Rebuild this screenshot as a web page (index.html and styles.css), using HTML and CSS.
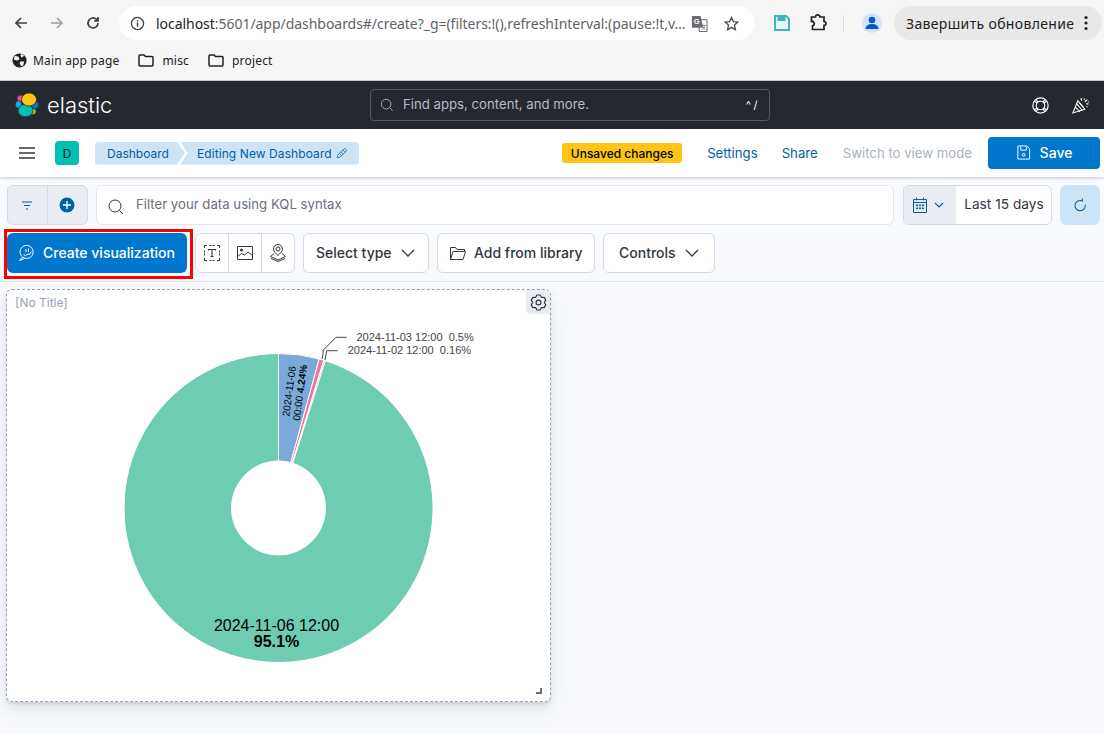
FILE: index.html
```html
<!DOCTYPE html>
<html lang="en">
<head>
<meta charset="utf-8">
<title>Elastic</title>
<link rel="stylesheet" href="styles.css">
</head>
<body>
<div class="browser">
  <div class="tabbar">
    <div class="navs">
      <svg class="nav" viewBox="0 0 16 16"><path d="M14 8H3M8 3L3 8l5 5" fill="none" stroke="#3c4043" stroke-width="1.7"/></svg>
      <svg class="nav" viewBox="0 0 16 16"><path d="M2 8h11M8 3l5 5-5 5" fill="none" stroke="#9aa0a6" stroke-width="1.5"/></svg>
      <svg class="nav" viewBox="0 0 16 16"><path d="M13 8a5 5 0 1 1-1.500-3.600L13 6M13 2v4H9" fill="none" stroke="#3c4043" stroke-width="1.7"/></svg>
    </div>
    <div class="omni">
      <svg class="omni-info" viewBox="0 0 16 16"><circle cx="8" cy="8" r="6.500" fill="none" stroke="#3c4043" stroke-width="1.400"/><path d="M8 7v4.400M8 4.400v1.400" stroke="#3c4043" stroke-width="1.500"/></svg>
      <span class="url"><b class="host">localhost</b>:5601/app/dashboards#/create?_g=(filters:!(),refreshInterval:(pause:!t,v…</span>
      <svg class="omni-tr" viewBox="0 0 18 18"><path d="M7 5h10v12.500H9z" fill="#fff" stroke="#5f6368"/><path d="M1 1h9l3 12.500H1z" fill="#6a6d72"/><text x="3" y="10" class="tr-g">G</text><text x="10.500" y="15" class="tr-a">文</text></svg>
      <svg class="omni-star" viewBox="0 0 16 16"><path d="M8 1.500l2 4.500 4.800.5-3.600 3.200 1 4.800L8 12.100 3.800 14.500l1-4.800L1.200 6.500 6 6z" fill="none" stroke="#4a4d52" stroke-width="1.400"/></svg>
    </div>
    <div class="exts">
      <svg class="ext-save" viewBox="0 0 16 16"><path d="M0 0h12.500L16 3.500V16H0z" fill="#39b8b8"/><path d="M2 2h1.500v4h8V2h.300L14 4.200V14H2z" fill="#e6f6f6"/><path d="M8.500 2H10v2.500H8.500z" fill="#39b8b8"/></svg>
      <svg class="ext-puz" viewBox="0 0 18 18"><path d="M2.500 3h4a2.200 2.200 0 0 1 4.400 0H15v4.500a1.900 1.900 0 0 1 0 3.800V15.500H3.500v-3.700a2.200 2.200 0 0 0-1-4.300z" fill="none" stroke="#202124" stroke-width="1.700"/></svg>
      <i class="sep"></i>
      <span class="avatar"><svg viewBox="0 0 20 20"><circle cx="10" cy="7" r="3.300" fill="#0b57d0"/><path d="M3.500 16c0-3.500 3-5 6.500-5s6.500 1.500 6.500 5z" fill="#0b57d0"/></svg></span>
      <span class="update">Завершить обновление<svg class="dots" viewBox="0 0 4 16"><circle cx="2" cy="2.500" r="1.600"/><circle cx="2" cy="8" r="1.600"/><circle cx="2" cy="13.500" r="1.600"/></svg></span>
    </div>
  </div>
  <div class="bookmarks">
    <span class="bm"><svg class="bm-globe" viewBox="0 0 16 16"><circle cx="8" cy="8" r="7.500" fill="#202124"/><path d="M3 3l4 1 1 3-3 1-3-1zM9 9l4 0-1 4-2 1-2-3zM10 1l3 2-3 2-1-3z" fill="#f5f5f5"/></svg>Main app page</span>
    <span class="bm"><svg class="bm-folder" viewBox="0 0 16 13"><path d="M1 2a1 1 0 0 1 1-1h4l1.500 1.500H14a1 1 0 0 1 1 1V11a1 1 0 0 1-1 1H2a1 1 0 0 1-1-1z" fill="none" stroke="#202124" stroke-width="1.500"/></svg>misc</span>
    <span class="bm"><svg class="bm-folder" viewBox="0 0 16 13"><path d="M1 2a1 1 0 0 1 1-1h4l1.500 1.500H14a1 1 0 0 1 1 1V11a1 1 0 0 1-1 1H2a1 1 0 0 1-1-1z" fill="none" stroke="#202124" stroke-width="1.500"/></svg>project</span>
  </div>
</div>

<header class="kbn-header">
  <div class="brand">
    <svg class="logo" viewBox="0 0 24 24">
      <g stroke="#25282f" stroke-width=".7">
      <ellipse cx="5.500" cy="5.500" rx="3.400" ry="3.400" fill="#f04e98"/>
      <ellipse cx="3.500" cy="11.500" rx="3.200" ry="3.800" fill="#1ba9f5"/>
      <ellipse cx="20" cy="12" rx="3.800" ry="3.800" fill="#0077cc"/>
      <ellipse cx="18" cy="18.500" rx="3.200" ry="3.200" fill="#93c90e"/>
      <ellipse cx="10.500" cy="17.500" rx="7.500" ry="6.300" fill="#00bfb3"/>
      <ellipse cx="14" cy="6.500" rx="7.500" ry="6.500" fill="#fec514"/>
      </g>
    </svg>
    <span class="wordmark">elastic</span>
  </div>
  <div class="global-search">
    <svg class="gs-icon" viewBox="0 0 16 16"><circle cx="7" cy="7" r="5.500" fill="none" stroke="#a4abb8" stroke-width="1.100"/><path d="M11 11l3.500 3.500" stroke="#a4abb8" stroke-width="1.100"/></svg>
    <span class="gs-text">Find apps, content, and more.</span>
    <span class="gs-key">^/</span>
  </div>
  <div class="hdr-icons">
    <svg class="hdr-ic" viewBox="0 0 16 16"><g fill="none" stroke="#fff" stroke-width="1.100"><circle cx="8" cy="8" r="7.200"/><circle cx="8" cy="8" r="4"/><path d="M2.500 4l2.500 1.800M4 2.500l1.800 2.500M13.500 4L11 5.800M12 2.500L10.200 5M2.500 12l2.500-1.800M4 13.500L5.800 11M13.500 12L11 10.200M12 13.500L10.200 11"/></g></svg>
    <svg class="hdr-ic" viewBox="0 0 16 16"><g fill="none" stroke="#fff" stroke-width="1"><path d="M.8 15L5.500 3.500l6.500 8z"/><path d="M3.200 9.500L7.500 14M4.500 6.500L9.800 12.700M7 5.500l4 4.500"/><path d="M8.500 1l.5 2.500M12 4.500l2.500-2M11.500 1.500v1M13.500 6.500h2M13.500 9l1 .5M15 4.500h.8" stroke-width="1.100"/></g></svg>
  </div>
</header>

<nav class="app-bar">
  <svg class="burger" viewBox="0 0 16 12"><path d="M0 1h16M0 6h16M0 11h16" stroke="#343741" stroke-width="1.700"/></svg>
  <span class="space">D</span>
  <div class="crumbs">
    <span class="crumb crumb-first">Dashboard</span>
    <span class="crumb crumb-last">Editing New Dashboard<svg class="pencil" viewBox="0 0 16 16"><path d="M1.500 14.500l1-4 8-8a1.500 1.500 0 0 1 2 0l1 1a1.500 1.500 0 0 1 0 2l-8 8zM4.500 8.500l3 3M6.500 6.500l3 3M9 4l3 3" fill="none" stroke="#0061a6" stroke-width="1"/></svg></span>
  </div>
  <div class="app-actions">
    <span class="unsaved">Unsaved changes</span>
    <a class="link link-settings">Settings</a>
    <a class="link link-share">Share</a>
    <a class="link link-off">Switch to view mode</a>
    <button class="save"><svg class="save-ic" viewBox="0 0 16 16"><path d="M2 1h9.500L14.500 4v11H2zM5 1.500v4h6v-4" fill="none" stroke="#fff" stroke-width="1"/><circle cx="8.200" cy="10.500" r="1.500" fill="none" stroke="#fff"/></svg>Save</button>
  </div>
</nav>

<section class="toolbar">
  <div class="query-row">
    <div class="filter-group">
      <span class="fg-cell"><svg class="fg-filter" viewBox="0 0 12 9"><path d="M1 1h10M3 4.500h6M5 8h2" stroke="#0061a6" stroke-width="1.100"/></svg></span>
      <span class="fg-cell fg-plus"><svg class="fg-add" viewBox="0 0 16 16"><circle cx="8" cy="8" r="7.500" fill="#0061a6"/><path d="M8 4v8M4 8h8" stroke="#fff" stroke-width="1.300"/></svg></span>
    </div>
    <div class="kql">
      <svg class="kql-ic" viewBox="0 0 16 16"><circle cx="7" cy="7" r="6" fill="none" stroke="#343741" stroke-width="1"/><path d="M11.500 11.500l3.500 3.500" stroke="#343741" stroke-width="1"/></svg>
      <span class="kql-text">Filter your data using KQL syntax</span>
    </div>
    <div class="date">
      <span class="date-cal">
        <svg class="cal" viewBox="0 0 14 16"><path d="M.5 2.500h13v13H.5zM.5 5.500h13M3.500 .5v3M10.500 .5v3" fill="none" stroke="#0061a6"/><path d="M3 7.500h2v1.500H3zM6 7.500h2v1.500H6zM9 7.500h2v1.500H9zM3 10.500h2v1.500H3zM6 10.500h2v1.500H6zM9 10.500h2v1.500H9z" fill="#0061a6"/></svg>
        <svg class="chev-s" viewBox="0 0 10 6"><path d="M1 1l4 4 4-4" fill="none" stroke="#0061a6" stroke-width="1.100"/></svg>
      </span>
      <span class="date-text">Last 15 days</span>
    </div>
    <button class="refresh"><svg class="refresh-ic" viewBox="0 0 14 16"><path d="M9.500 3.200A5.500 5.500 0 1 0 12.500 7M9.500 .5v3.500" fill="none" stroke="#0061a6" stroke-width="1.100"/></svg></button>
  </div>
  <div class="action-row">
    <button class="create"><svg class="create-ic" viewBox="0 0 16 16"><g fill="none" stroke="#fff" stroke-width="1"><path d="M3 11.500A6.500 6.500 0 1 1 6 13.200"/><path d="M.5 15.500L3.500 12l2.500 1.300z"/><path d="M4.500 9.500l2 1 2.500-1.500 1.500.5 2-3"/><path d="M7 4v3M9.500 3.500V7"/></g></svg>Create visualization</button>
    <div class="icon-group">
      <span class="ig-cell"><svg class="ig-ic" viewBox="0 0 16 16"><path d="M.5 3V.5H3M5.500 .5h2M8.500 .5h2M13 .5h2.500V3M15.500 5.500v2M15.500 8.500v2M15.500 13v2.500H13M10.500 15.500h-2M7.500 15.500h-2M3 15.500H.5V13M.5 10.500v-2M.5 7.500v-2" fill="none" stroke="#343741"/><path d="M4.500 5.500v-1h7v1M8 4.500v7M6.500 11.500h3" fill="none" stroke="#343741" stroke-width="1.100"/></svg></span>
      <span class="ig-cell"><svg class="ig-ic" viewBox="0 0 16 16"><path d="M.5 1.500h15v13H.5z" fill="none" stroke="#343741"/><circle cx="4.500" cy="5" r="1.500" fill="#343741"/><path d="M.5 11.500l4-3 3 1.500L11 7l4.500 3.500" fill="none" stroke="#343741"/></svg></span>
      <span class="ig-cell"><svg class="ig-ic ig-map" viewBox="0 0 16 18"><g fill="none" stroke="#343741"><path d="M8 11.500C6 9.500 3.500 7.500 3.500 5a4.500 4.500 0 0 1 9 0c0 2.500-2.500 4.500-4.500 6.500z"/><circle cx="8" cy="5" r="2"/><path d="M4 9.500L.5 12.500 8 16l7.500-3.500L12 9.500"/><path d="M1 14.500L8 17.500l7-3"/></g></svg></span>
    </div>
    <button class="tb-btn tb-select">Select type<svg class="chev" viewBox="0 0 14 8"><path d="M1 1l6 6 6-6" fill="none" stroke="#343741" stroke-width="1.300"/></svg></button>
    <button class="tb-btn tb-lib"><svg class="lib-ic" viewBox="0 0 16 13"><path d="M.5 12.500V.5h5l1.500 2h7.500v2M.5 12.500h12.500l2.500-8H3z" fill="none" stroke="#343741"/></svg>Add from library</button>
    <button class="tb-btn tb-controls">Controls<svg class="chev" viewBox="0 0 14 8"><path d="M1 1l6 6 6-6" fill="none" stroke="#343741" stroke-width="1.300"/></svg></button>
    <div class="marker"></div>
  </div>
</section>

<main class="canvas">
  <article class="panel">
    <span class="panel-title">[No Title]</span>
    <span class="panel-gear"><svg class="gear" viewBox="0 0 16 16"><path d="M6.500 .96H9.500L10.700 3.320 13.350 3.180 14.850 5.780 13.400 8 14.850 10.220 13.350 12.820 10.700 12.680 9.500 15.040H6.500L5.300 12.680 2.650 12.820 1.150 10.220 2.600 8 1.150 5.780 2.650 3.180 5.300 3.320z" fill="none" stroke="#343741" stroke-width="1.100" stroke-linejoin="round"/><circle cx="8" cy="8" r="2.300" fill="none" stroke="#343741" stroke-width="1.100"/></svg></span>
    <svg class="pie" width="543" height="410" viewBox="0 0 543 410">
      <path class="slice" d="M271.500 62.500A154.500 154.500 0 0 1 312.160 67.950L283.870 171.660A47 47 0 0 0 271.500 170z" fill="#79aad9"/>
      <path class="slice" d="M312.160 67.950A154.500 154.500 0 0 1 316.830 69.300L285.290 172.070A47 47 0 0 0 283.870 171.660z" fill="#ee789d"/>
      <path class="slice" d="M316.830 69.300A154.500 154.500 0 0 1 318.320 69.760L285.740 172.210A47 47 0 0 0 285.290 172.070z" fill="#e4a6c7"/>
      <path class="slice" d="M318.320 69.760A154.500 154.500 0 1 1 271.500 62.500L271.500 170A47 47 0 1 0 285.740 172.210z" fill="#6dccb1"/>
      <path class="leader" d="M315.300 68l1-9 12.700-12.700h10.700M318 69l1.700-9.300h11"/>
      <text class="lbl-out" x="349.500" y="50">2024-11-03 12:00  0.5%</text>
      <text class="lbl-out" x="340.700" y="63">2024-11-02 12:00  0.16%</text>
      <g transform="translate(288 101) rotate(-82.370)">
        <text class="lbl-in" y="-2.500">2024-11-06</text>
        <text class="lbl-in" y="8.500">00:00 <tspan class="lbl-bold">4.24%</tspan></text>
      </g>
      <text class="lbl-main" x="269.500" y="339.500">2024-11-06 12:00</text>
      <text class="lbl-main lbl-bold" x="269.500" y="355.500">95.1%</text>
    </svg>
    <span class="resize"></span>
  </article>
</main>
</body>
</html>
```
FILE: styles.css
```css
* { box-sizing: border-box; }
html, body { margin: 0; padding: 0; }
body {
  width: 1104px;
  height: 734px;
  overflow: hidden;
  background: #f8fafd;
  font-family: Inter, "Liberation Sans", sans-serif;
  color: #343741;
}
svg { display: block; flex: none; }
button { font-family: inherit; cursor: pointer; padding: 0; }

/* browser chrome */
.browser {
  height: 81px;
  background: #f5f5f5;
  border-bottom: 1px solid #c8c8c8;
  font-family: "Noto Sans", sans-serif;
}
.tabbar { height: 44px; display: flex; align-items: flex-start; padding-top: 6px; }
.navs { width: 119px; height: 34px; display: flex; align-items: center; padding-left: 13px; gap: 20px; }
.nav { width: 16px; height: 16px; }
.omni {
  width: 636px; height: 34px; border-radius: 17px; background: #fff;
  display: flex; align-items: center; padding-left: 11px;
}
.omni-info { width: 15px; height: 15px; margin-right: 11px; }
.url { font-size: 14px; color: #5f6368; width: 534px; white-space: nowrap; overflow: hidden; letter-spacing: -.04px; }
.host { font-weight: 400; color: #202124; }
.omni-tr { width: 17px; height: 17px; margin-left: 1px; }
.tr-g { font: bold 8px "Liberation Sans", sans-serif; fill: #fff; }
.tr-a { font: 6px "Noto Sans CJK SC", sans-serif; fill: #5f6368; }
.omni-star { width: 15px; height: 15px; margin-left: 16px; }
.exts { display: flex; align-items: center; height: 34px; }
.ext-save { width: 16px; height: 16px; margin-left: 19px; }
.ext-puz { width: 18px; height: 18px; margin-left: 19px; }
.sep { width: 1px; height: 16px; background: #dadce0; margin-left: 16px; }
.avatar { width: 20px; height: 20px; border-radius: 50%; background: #d3e3fd; margin-left: 18px; }
.update {
  height: 34px; width: 208px; margin-left: 12px; border-radius: 17px; background: #e8e8e8;
  display: flex; align-items: center; padding-left: 12px; font-size: 14px; letter-spacing: .35px; color: #202124; white-space: nowrap;
}
.dots { width: 4px; height: 16px; margin-left: 10px; fill: #202124; }
.bookmarks { height: 36px; display: flex; align-items: center; padding-left: 12px; gap: 19px; font-size: 12px; letter-spacing: .18px; color: #202124; padding-bottom: 4px; }
.bm { display: flex; align-items: center; }
.bm-globe { width: 15px; height: 15px; margin-right: 6px; }
.bm-folder { width: 16px; height: 13px; margin-right: 8px; }

/* elastic header */
.kbn-header { height: 48px; background: #25282f; display: flex; align-items: center; position: relative; }
.brand { width: 370px; display: flex; align-items: center; padding-left: 15px; }
.logo { width: 24px; height: 24px; }
.wordmark { font-size: 22px; font-weight: 300; color: #fff; margin-left: 8px; }
.global-search {
  width: 400px; height: 32px; border: 1px solid #535966; border-radius: 4px;
  display: flex; align-items: center; padding: 0 0 0 9px; color: #aeb5c2; font-size: 13.2px;
}
.gs-icon { width: 14px; height: 14px; margin-right: 9px; }
.gs-text { flex: 1; color: #b4bac6; padding-bottom: 2px; }
.gs-key { color: #fff; font-size: 11px; margin-right: 9px; letter-spacing: 2.5px; }
.hdr-icons { display: flex; gap: 23px; margin-left: 262px; }
.hdr-ic { width: 17px; height: 17px; }

/* app bar */
.app-bar {
  height: 48px; background: #fff; display: flex; align-items: center;
  box-shadow: 0 1px 3px rgba(40,50,70,.25); position: relative; z-index: 1; padding-left: 19px;
}
.burger { width: 16px; height: 12px; }
.space {
  width: 24px; height: 24px; background: #00bfb3; border-radius: 4px; margin-left: 20px;
  display: flex; align-items: center; justify-content: center; font-size: 12px; color: #1a1c21;
}
.crumbs { display: flex; margin-left: 16px; height: 23px; font-size: 12px; color: #0061a6; }
.crumb { background: #cce4f5; display: flex; align-items: center; height: 23px; }
.crumb-first {
  width: 90px; padding-left: 12px; border-radius: 4px 0 0 4px;
  clip-path: polygon(0 0, 82px 0, 90px 50%, 82px 100%, 0 100%);
}
.crumb-last {
  width: 179px; margin-left: -5px; padding-left: 17px; border-radius: 0 4px 4px 0; letter-spacing: .08px;
  clip-path: polygon(0 0, 100% 0, 100% 100%, 0 100%, 8px 50%);
}
.pencil { width: 12px; height: 12px; margin-left: 4px; }
.app-actions { margin-left: auto; display: flex; align-items: center; font-size: 13.2px; padding-right: 4px; }
.unsaved {
  width: 120px; height: 20px; background: #fec514; border-radius: 3px; color: #000;
  font-size: 12px; font-weight: 500; display: flex; align-items: center; justify-content: center;
}
.link { color: #0061a6; padding-bottom: 1px; }
.link-settings { margin-left: 25px; }
.link-share { margin-left: 24px; }
.link-off { margin-left: 25px; color: #a9b2c2; }
.save {
  width: 112px; height: 32px; margin-left: 16px; background: #0077cc; color: #fff; border: 0; border-radius: 4px;
  font-size: 14px; font-weight: 500; display: flex; align-items: center; justify-content: center; padding-bottom: 1px;
}
.save-ic { width: 15px; height: 15px; margin-right: 9px; }

/* toolbar */
.toolbar { height: 105px; padding: 8px 4px 0 7px; border-bottom: 1px solid #dfe4ec; }
.query-row { display: flex; height: 40px; }
.filter-group { width: 81px; display: flex; background: #e9edf3; border: 1px solid #d3dae6; border-radius: 6px; }
.fg-cell { flex: 1; display: flex; align-items: center; justify-content: center; }
.fg-plus { border-left: 1px solid #d3dae6; }
.fg-filter { width: 12px; height: 9px; }
.fg-add { width: 16px; height: 16px; }
.kql {
  width: 799px; margin-left: 8px; background: #fff; border: 1px solid #e2e6ee; border-radius: 6px;
  display: flex; align-items: center; padding-left: 11px; font-size: 13.2px; color: #69707d;
}
.kql-text { padding-bottom: 2px; }
.kql-ic { width: 16px; height: 16px; margin-right: 12px; margin-top: 3px; }
.date { width: 149px; margin-left: 9px; display: flex; background: #fff; border: 1px solid #d3dae6; border-radius: 6px; overflow: hidden; font-size: 13.7px; }
.date-cal { width: 52px; background: #e9edf3; display: flex; align-items: center; padding-left: 9px; gap: 7px; }
.cal { width: 14px; height: 16px; }
.chev-s { width: 10px; height: 6px; }
.date-text { padding: 0 0 2px 8px; display: flex; align-items: center; color: #343741; white-space: nowrap; }
.refresh { width: 40px; margin-left: 8px; background: #cce4f5; border: 0; border-radius: 6px; display: flex; align-items: center; justify-content: center; }
.refresh-ic { width: 14px; height: 15px; }

.action-row { display: flex; height: 40px; margin-top: 8px; position: relative; }
.create {
  width: 180px; background: #0077cc; color: #fff; border: 0; border-radius: 6px;
  font-size: 14px; font-weight: 500; display: flex; align-items: center; padding: 0 0 2px 12px; white-space: nowrap;
}
.create-ic { width: 16px; height: 16px; margin-right: 8px; margin-top: 2px; }
.marker { position: absolute; left: -3px; top: -4px; width: 189px; height: 50px; border: 3px solid #f00; pointer-events: none; }
.icon-group { width: 100px; margin-left: 8px; display: flex; background: #fff; border: 1px solid #d3dae6; border-radius: 6px; }
.ig-cell { flex: 1; display: flex; align-items: center; justify-content: center; }
.ig-cell + .ig-cell { border-left: 1px solid #d3dae6; }
.ig-ic { width: 16px; height: 16px; }
.ig-map { height: 18px; }
.tb-btn {
  height: 40px; background: #fff; border: 1px solid #d3dae6; border-radius: 6px; color: #343741;
  font-size: 14px; font-weight: 500; display: flex; align-items: center; white-space: nowrap; padding-bottom: 2px;
}
.tb-select { width: 126px; margin-left: 8px; padding-left: 12px; }
.tb-lib { width: 158px; margin-left: 8px; padding-left: 12px; }
.tb-controls { width: 112px; margin-left: 8px; padding-left: 15px; }
.chev { width: 14px; height: 8px; margin-left: 9px; margin-top: 2px; }
.lib-ic { width: 16px; height: 13px; margin-right: 8px; margin-top: 2px; }

/* dashboard */
.canvas { padding: 7px 0 0 6px; }
.panel {
  position: relative; width: 545px; height: 413px; padding-top: 1px; background: #fff;
  border: 1px dashed #98a2b3; border-radius: 6px;
  box-shadow: 0 2px 2px rgba(152,162,179,.25), 0 6px 12px rgba(152,162,179,.2), 0 12px 20px rgba(152,162,179,.1);
}
.panel-title { position: absolute; left: 8px; top: 5px; font-size: 12px; color: #98a2b3; }
.panel-gear {
  position: absolute; right: 0; top: 0; width: 24px; height: 24px; background: #e9edf3;
  border-radius: 0 5px 0 5px; display: flex; align-items: center; justify-content: center;
}
.gear { width: 17px; height: 17px; }
.pie { display: block; }
.slice { stroke: #fff; stroke-width: 1; }
.leader { fill: none; stroke: #1a1c21; stroke-width: .8; }
.lbl-out { font: 11px "Liberation Sans", sans-serif; fill: #444; white-space: pre; }
.lbl-in { font: 10px "Liberation Sans", sans-serif; fill: #000; text-anchor: middle; }
.lbl-bold { font-weight: bold; }
.lbl-main { font: 16px "Liberation Sans", sans-serif; fill: #000; text-anchor: middle; }
.lbl-main.lbl-bold { font-weight: bold; }
.resize {
  position: absolute; right: 8px; bottom: 7px; width: 6px; height: 6px;
  border-right: 2px solid #69707d; border-bottom: 2px solid #69707d;
}
```
